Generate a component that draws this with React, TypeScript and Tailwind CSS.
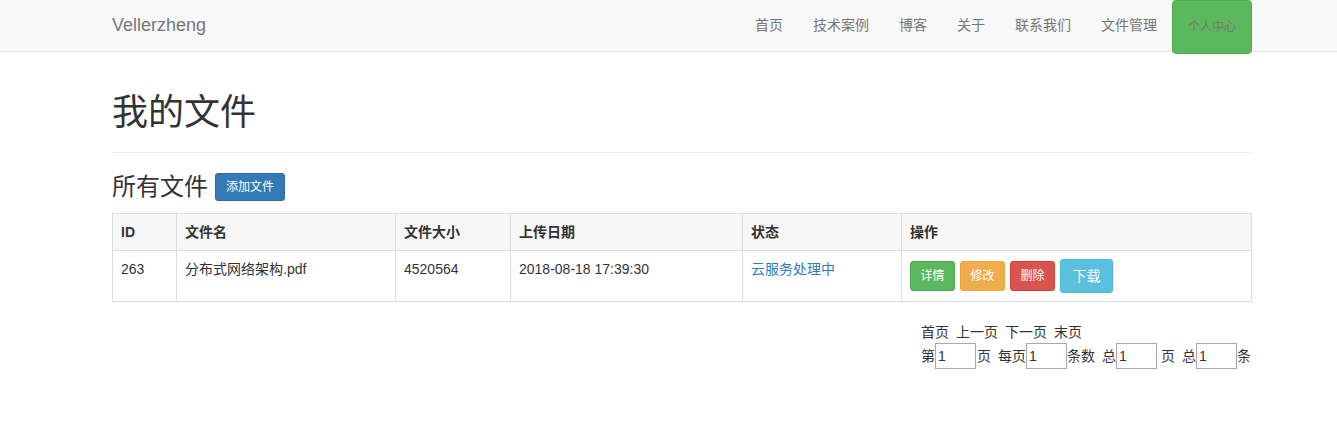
const font = "font-['Liberation_Sans','Noto_Sans_CJK_SC',sans-serif]"

const navLinks = ["首页", "技术案例", "博客", "关于", "联系我们", "文件管理"]

function Navbar() {
  return (
    <nav className="h-[52px] border-b border-[#e7e7e7] bg-[#f8f8f8]">
      <div className="ml-[112px] flex h-[51px] w-[1140px] items-start justify-between">
        <a className="flex h-[51px] items-center text-[18px] text-[#777]">Vellerzheng</a>
        <ul className="flex items-start">
          {navLinks.map((l) => (
            <li key={l} className="flex h-[51px] items-center px-[15px] text-[14px] text-[#777]">
              {l}
            </li>
          ))}
          <li className="relative z-10 flex h-[54px] w-[80px] items-center justify-center rounded-[4px] border border-[#4cae4c] bg-[#5cb85c] text-[12px] text-[#777]">
            个人中心
          </li>
        </ul>
      </div>
    </nav>
  )
}

function Btn({ label, cls, big }: { label: string; cls: string; big?: boolean }) {
  return (
    <span
      className={`inline-flex items-center justify-center rounded-[3px] border text-white ${cls} ${
        big ? "h-[34px] w-[53px] text-[14px]" : "h-[30px] w-[45px] text-[12px]"
      }`}
    >
      {label}
    </span>
  )
}

const cols = [
  { h: "ID", w: "w-[64px]" },
  { h: "文件名", w: "w-[219px]" },
  { h: "文件大小", w: "w-[115px]" },
  { h: "上传日期", w: "w-[232px]" },
  { h: "状态", w: "w-[159px]" },
  { h: "操作", w: "" },
]

function FileTable() {
  const cell = "border border-[#ddd] p-[8px] align-top leading-[20px]"
  return (
    <table className="w-full table-fixed border-collapse text-[14px] text-[#333]">
      <thead>
        <tr className="bg-[#f7f7f7]">
          {cols.map((c) => (
            <th key={c.h} className={`${cell} ${c.w} text-left font-bold`}>
              {c.h}
            </th>
          ))}
        </tr>
      </thead>
      <tbody>
        <tr>
          <td className={cell}>263</td>
          <td className={cell}>分布式网络架构.pdf</td>
          <td className={cell}>4520564</td>
          <td className={cell}>2018-08-18 17:39:30</td>
          <td className={`${cell} text-[#337ab7]`}>云服务处理中</td>
          <td className={cell}>
            <div className="flex items-center gap-[5px]">
              <Btn label="详情" cls="border-[#4cae4c] bg-[#5cb85c]" />
              <Btn label="修改" cls="border-[#eea236] bg-[#f0ad4e]" />
              <Btn label="删除" cls="border-[#d43f3a] bg-[#d9534f]" />
              <Btn label="下载" cls="border-[#46b8da] bg-[#5bc0de]" big />
            </div>
          </td>
        </tr>
      </tbody>
    </table>
  )
}

function PageInput() {
  return (
    <input
      defaultValue="1"
      className="h-[26px] w-[41px] shrink-0 border border-[#a9a9a9] px-[2px] text-[14px] text-[#333] outline-none"
    />
  )
}

function Pager() {
  return (
    <div className="mt-[20px] flex justify-end whitespace-nowrap text-[14px] leading-[20px] text-[#333]">
      <div className="w-[331px]">
        <div className="flex gap-[7px]">
          <span>首页</span>
          <span>上一页</span>
          <span>下一页</span>
          <span>末页</span>
        </div>
        <div className="mt-[1px] flex items-center">
          <span>第</span>
          <PageInput />
          <span className="ml-[1px]">页</span>
          <span className="ml-[7px]">每页</span>
          <PageInput />
          <span>条数</span>
          <span className="ml-[7px]">总</span>
          <PageInput />
          <span className="ml-[4px]">页</span>
          <span className="ml-[7px]">总</span>
          <PageInput />
          <span>条</span>
        </div>
      </div>
    </div>
  )
}

export default function App() {
  return (
    <div className={`min-h-[443px] bg-white ${font}`}>
      <Navbar />
      <main className="ml-[112px] w-[1140px] pt-[41px]">
        <div className="border-b border-[#eee] pb-[9px]">
          <h1 className="mb-[10px] text-[36px] leading-[40px] text-[#333]">我的文件</h1>
        </div>
        <div className="mt-[20px] mb-[12px] flex items-center gap-[7px]">
          <h3 className="text-[24px] leading-[28px] text-[#333]">所有文件</h3>
          <span className="inline-flex h-[28px] items-center rounded-[3px] border border-[#2e6da4] bg-[#337ab7] px-[10px] text-[12px] text-white">
            添加文件
          </span>
        </div>
        <FileTable />
        <Pager />
      </main>
    </div>
  )
}
